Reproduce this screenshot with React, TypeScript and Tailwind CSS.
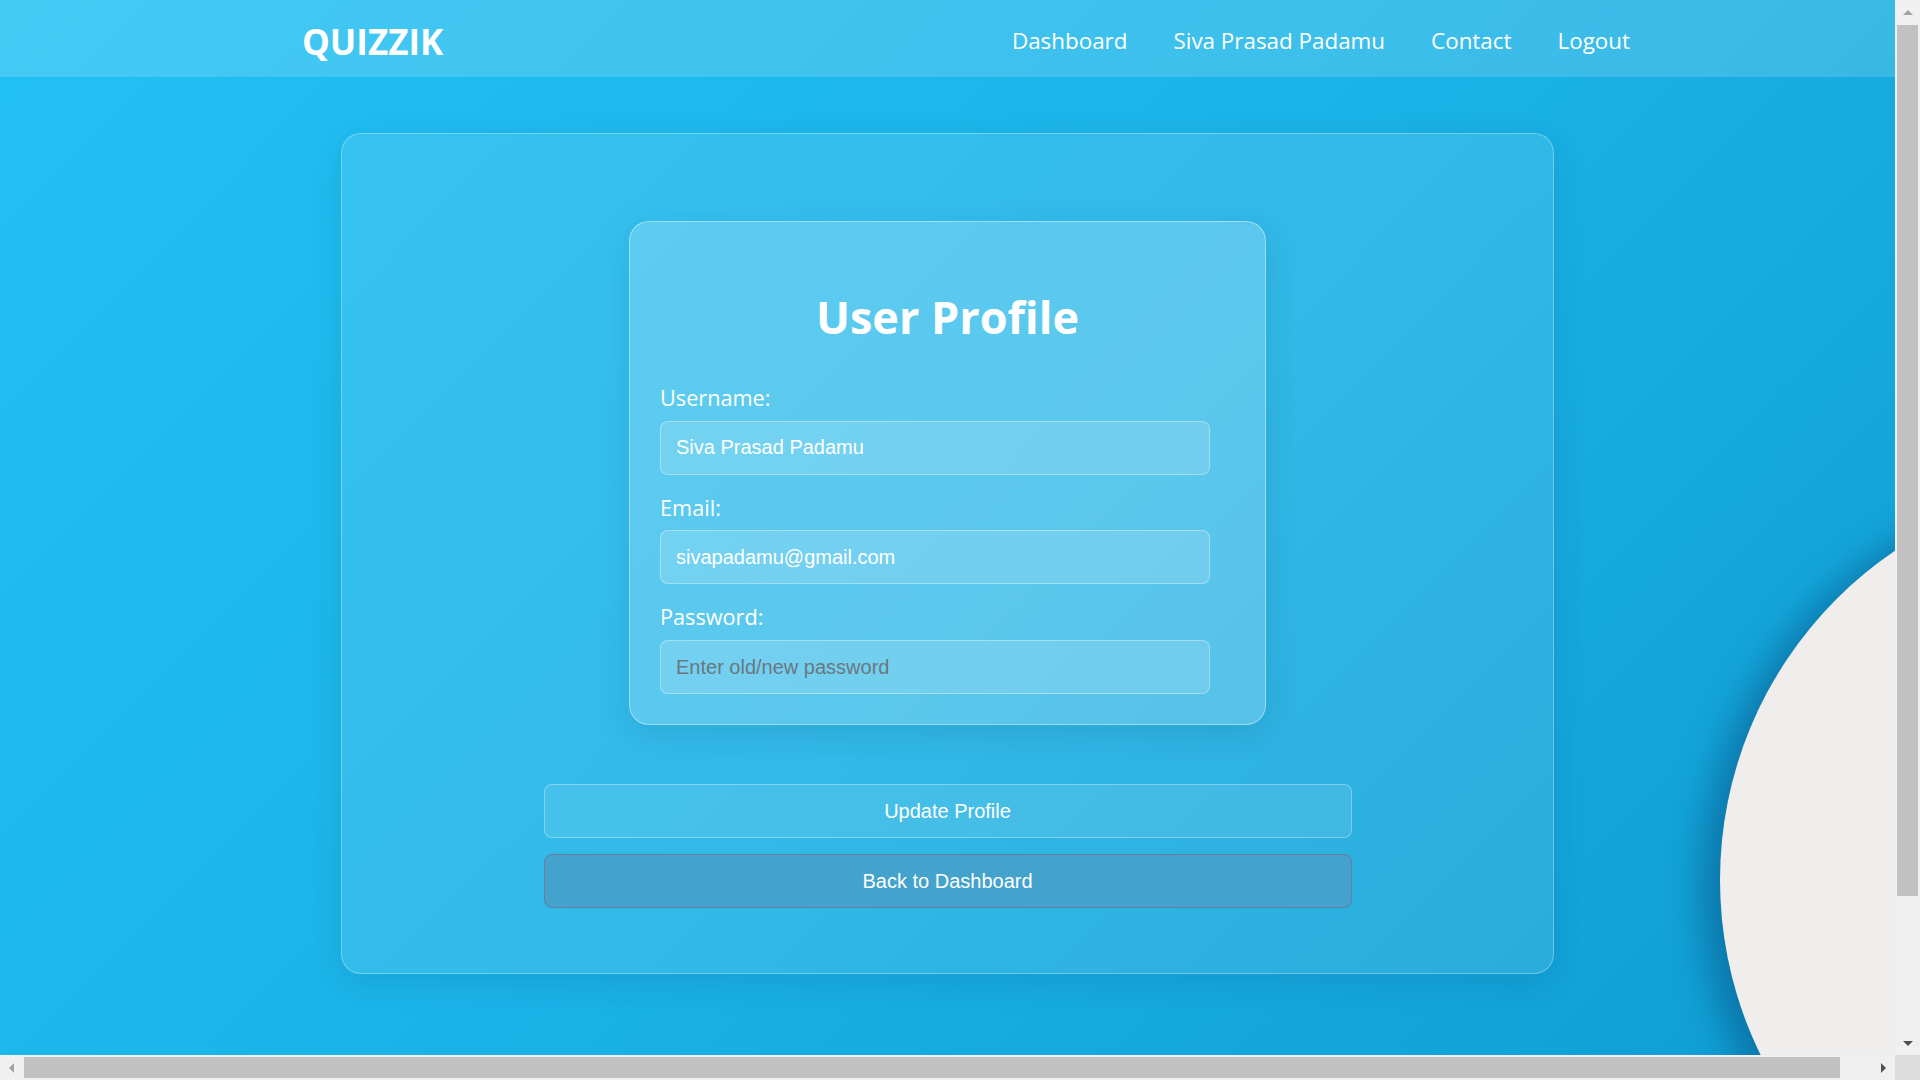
import React from 'react';

const navLinks = ['Dashboard', 'Siva Prasad Padamu', 'Contact', 'Logout'];

function Field({ label, value, placeholder, type = 'text', first = false }: any) {
  return (
    <div className={first ? 'mt-[48px]' : 'mt-[22px]'}>
      <label className="block text-[21.7px] leading-none text-white">{label}</label>
      <input
        type={type}
        defaultValue={value}
        placeholder={placeholder}
        className="mt-[12px] block w-[550px] h-[54px] px-[15px] rounded-[8px] border border-white/35 bg-white/15 text-[20px] text-white placeholder:text-[#6a7780] outline-none font-['Liberation_Sans',Arial,sans-serif]"
      />
    </div>
  );
}

function Arrow({ dir, dark }: { dir: 'up' | 'down' | 'left' | 'right'; dark?: boolean }) {
  const pts = {
    up: '1,8 6,3 11,8',
    down: '1,4 6,9 11,4',
    left: '8,1 3,6 8,11',
    right: '4,1 9,6 4,11',
  }[dir];
  return (
    <svg width="12" height="12" viewBox="0 0 12 12">
      <polygon points={pts} fill={dark ? '#505050' : '#a3a3a3'} />
    </svg>
  );
}

export default function App() {
  return (
    <div className="w-[1920px] h-[1080px] flex flex-col overflow-hidden bg-[#f0f0f0]">
      <div className="flex h-[1055px]">
        {/* Page */}
        <div className="relative w-[1895px] h-full overflow-hidden text-white font-['Open_Sans',sans-serif] bg-[linear-gradient(135deg,#22c1f4_0%,#1bb3e7_50%,#0f9dd2_100%)]">
          <nav className="h-[77px] flex items-center justify-between pl-[302px] pr-[265px] pt-[5px] bg-white/15">
            <span className="text-[35px] font-bold leading-none">QUIZZIK</span>
            <ul className="flex gap-[46px] text-[22.4px] leading-none">
              {navLinks.map((l) => (
                <li key={l} className="cursor-pointer">{l}</li>
              ))}
            </ul>
          </nav>

          <main className="flex justify-center pt-[56px]">
            <section className="w-[1213px] h-[841px] rounded-[20px] border border-white/30 bg-white/10 shadow-[0_8px_32px_rgba(0,40,90,0.12)] flex flex-col items-center pt-[87px]">
              <div className="w-[637px] rounded-[20px] border border-white/40 bg-white/20 shadow-[0_8px_32px_rgba(0,40,90,0.12)] px-[30px] pt-[72px] pb-[30px]">
                <h1 className="text-center text-[45px] font-bold leading-none">User Profile</h1>
                <Field first label="Username:" value="Siva Prasad Padamu" />
                <Field label="Email:" value="sivapadamu@gmail.com" />
                <Field label="Password:" type="password" placeholder="Enter old/new password" />
              </div>

              <div className="mt-[59px] w-[808px] flex flex-col gap-[16px] font-['Liberation_Sans',Arial,sans-serif]">
                <button className="h-[54px] rounded-[8px] border border-white/30 bg-white/10 text-[20px] text-white">
                  Update Profile
                </button>
                <button className="h-[54px] rounded-[8px] border border-[#6b7b9b] bg-[#43a3cd] text-[20px] text-white">
                  Back to Dashboard
                </button>
              </div>
            </section>
          </main>

          {/* decorative circle */}
          <div className="absolute left-[1720px] top-[483px] w-[794px] h-[794px] rounded-full bg-[#f0eded] shadow-[-18px_6px_36px_rgba(0,50,100,0.4)]" />
        </div>

        {/* vertical scrollbar */}
        <div className="w-[25px] h-full bg-[#f0f0f0] flex flex-col">
          <div className="h-[25px] flex items-center justify-center">
            <Arrow dir="up" />
          </div>
          <div className="ml-[2px] w-[21px] h-[871px] bg-[#c1c1c1]" />
          <div className="flex-1" />
          <div className="h-[25px] flex items-center justify-center">
            <Arrow dir="down" dark />
          </div>
        </div>
      </div>

      {/* horizontal scrollbar */}
      <div className="flex h-[25px]">
        <div className="w-[1895px] h-full bg-[#f0f0f0] flex items-center">
          <div className="w-[24px] flex justify-center">
            <Arrow dir="left" />
          </div>
          <div className="w-[1816px] h-[21px] bg-[#c1c1c1]" />
          <div className="flex-1 flex justify-end pr-[6px]">
            <Arrow dir="right" dark />
          </div>
        </div>
        <div className="w-[25px] h-full bg-[#dcdcdc]" />
      </div>
    </div>
  );
}
